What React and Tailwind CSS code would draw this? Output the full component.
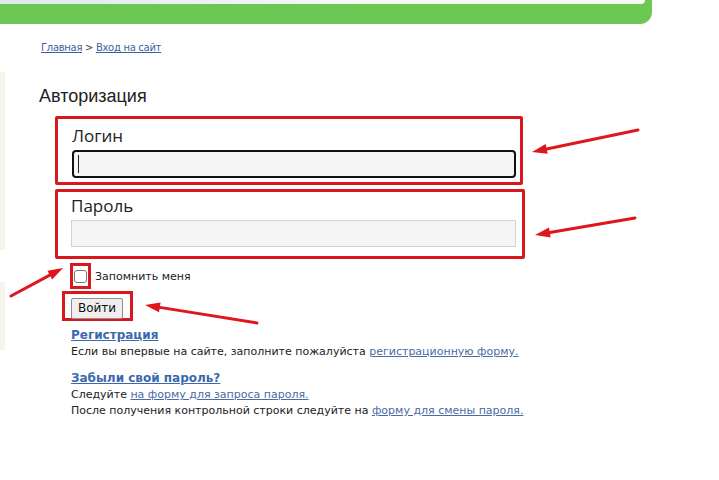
import React from 'react';

const Arrow = ({ x1, y1, x2, y2 }) => {
    const dx = x2 - x1;
    const dy = y2 - y1;
    const len = Math.hypot(dx, dy);
    const ux = dx / len;
    const uy = dy / len;
    const bx = x2 - ux * 15;
    const by = y2 - uy * 15;
    const nx = -uy * 5;
    const ny = ux * 5;
    return (
        <g>
            <line x1={x1} y1={y1} x2={bx} y2={by} stroke="#e0161d" strokeWidth="3" strokeLinecap="round" />
            <polygon points={`${x2},${y2} ${bx + nx},${by + ny} ${bx - nx},${by - ny}`} fill="#e0161d" />
        </g>
    );
};

const App = () => {
    return (
        <div className="relative w-[719px] h-[480px] overflow-hidden bg-white font-['DejaVu_Sans',sans-serif] text-[#222]">
            {/* Header strip */}
            <div className="w-[652px] h-[24px] bg-[#6cc852] rounded-br-[12px]">
                <div className="w-[645px] h-[4px] rounded-br-[8px] bg-gradient-to-r from-[#dfe8f0] via-[#f4f7f5] to-[#f7f9f4]" />
            </div>

            <div className="flex">
                {/* left edge of sidebar */}
                <div className="w-[5px] flex flex-col">
                    <div className="mt-[48px] h-[178px] bg-[#f7f5e9]" />
                    <div className="mt-[32px] h-[68px] bg-[#f7f5e9]" />
                </div>

                <div className="pl-[34px] flex flex-col">
                    {/* Breadcrumb */}
                    <div className="mt-[17px] ml-[2px] h-[14px] leading-[14px] text-[10px] tracking-[-0.3px] text-[#444]">
                        <a className="text-[#3d5f9c] underline">Главная</a>
                        <span> &gt; </span>
                        <a className="text-[#3d5f9c] underline">Вход на сайт</a>
                    </div>

                    <h1 className="mt-[30px] h-[22px] leading-[22px] text-[18px] font-['Liberation_Sans',sans-serif] text-[#222]">
                        Авторизация
                    </h1>

                    {/* Login box */}
                    <div className="mt-[9px] ml-[16px] w-[468px] h-[69px] border-[3px] border-[#d9181e] rounded-[2px] pl-[14px] pr-[4px] pt-[7px] font-['Open_Sans',sans-serif]">
                        <div className="h-[20px] leading-[20px] text-[17px] text-[#222]">Логин</div>
                        <div className="mt-[4px] w-[444px] h-[28px] border-2 border-[#111] rounded-[4px] bg-[#f5f5f5] flex items-center pl-[4px]">
                            <div className="w-px h-[18px] bg-[#222]" />
                        </div>
                    </div>

                    {/* Password box */}
                    <div className="mt-[4px] ml-[16px] w-[470px] h-[70px] border-[3px] border-[#d9181e] rounded-[2px] pl-[13px] pt-[4px] font-['Open_Sans',sans-serif]">
                        <div className="h-[20px] leading-[20px] text-[17px] text-[#222]">Пароль</div>
                        <div className="mt-[4px] w-[445px] h-[27px] border border-[#d2d2d2] bg-[#f5f5f5]" />
                    </div>

                    {/* Remember */}
                    <div className="mt-[4px] ml-[31px] flex items-start">
                        <div className="w-[21px] h-[26px] border-[3px] border-[#d9181e] flex items-center justify-center">
                            <div className="w-[13px] h-[13px] border border-[#767676] rounded-[3px] bg-white" />
                        </div>
                        <span className="ml-[4px] mt-[7px] leading-[14px] text-[11px] text-[#222]">Запомнить меня</span>
                    </div>

                    {/* Submit */}
                    <div className="mt-[2px] ml-[23px] w-[71px] h-[30px] border-[3px] border-[#d9181e] pl-[6px] pt-[1px]">
                        <button className="w-[52px] h-[21px] border border-[#8f8f8f] rounded-[2px] bg-[#efefef] text-[12px] leading-[19px] text-[#111]">
                            Войти
                        </button>
                    </div>

                    {/* Links */}
                    <div className="ml-[32px] mt-[5px] text-[11px] leading-[16px] text-[#222]">
                        <div className="pt-[1px]">
                            <a className="font-bold text-[12px] text-[#3d67ae] underline">Регистрация</a>
                        </div>
                        <div>
                            Если вы впервые на сайте, заполните пожалуйста{' '}
                            <a className="text-[#4a6ba6] underline">регистрационную форму.</a>
                        </div>
                        <div className="mt-[10px]">
                            <a className="font-bold text-[12px] text-[#3d67ae] underline">Забыли свой пароль?</a>
                        </div>
                        <div>
                            Следуйте <a className="text-[#4a6ba6] underline">на форму для запроса пароля.</a>
                        </div>
                        <div>
                            После получения контрольной строки следуйте на{' '}
                            <a className="text-[#4a6ba6] underline">форму для смены пароля.</a>
                        </div>
                    </div>
                </div>
            </div>

            {/* Annotation arrows */}
            <svg className="absolute inset-0 pointer-events-none" width="719" height="480">
                <Arrow x1={638} y1={130} x2={532} y2={152} />
                <Arrow x1={635} y1={218} x2={535} y2={235} />
                <Arrow x1={11} y1={296} x2={63} y2={268} />
                <Arrow x1={257} y1={323} x2={145} y2={305} />
            </svg>
        </div>
    );
};

export default App;
